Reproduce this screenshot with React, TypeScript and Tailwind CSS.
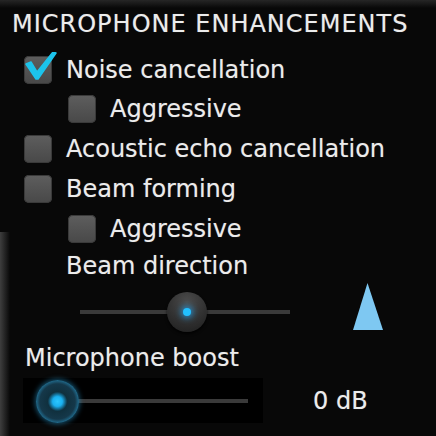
import React from "react";

function Box({ checked = false }: { checked?: boolean }) {
  return (
    <div className="relative w-[28px] h-[28px] shrink-0 rounded-[5px] bg-linear-to-b from-[#5e5e5e] to-[#484848] shadow-[inset_0_0_0_1px_#3a3a3a]">
      {checked && (
        <svg className="absolute left-0 top-[-4px]" width="34" height="34" viewBox="0 0 34 34">
          <path d="M2 12 L7 10 L13 20 L29 0 L32 1 L14 27 L12 27 Z" fill="#1cc4ec" stroke="#1cc4ec" strokeWidth="1.5" strokeLinejoin="round" />
        </svg>
      )}
    </div>
  );
}

function Row({ indent = false, checked = false, label, h = "h-[40px]" }: { indent?: boolean; checked?: boolean; label: string; h?: string }) {
  return (
    <div className={`flex items-center ${h} ${indent ? "pl-[68px]" : "pl-[24px]"}`}>
      <Box checked={checked} />
      <span className="ml-[14px] leading-none">{label}</span>
    </div>
  );
}

export default function App() {
  return (
    <div
      className="relative w-[436px] h-[436px] overflow-hidden bg-[#080808] text-[#ececec] text-[24px] [text-shadow:0_0_1px_rgba(255,255,255,0.35)]"
      style={{ fontFamily: '"DejaVu Sans", Verdana, sans-serif' }}
    >
      <div className="absolute left-0 top-0 w-full h-[8px] bg-linear-to-b from-[#262626] to-transparent" />
      <div className="absolute left-0 top-[232px] bottom-0 w-[10px] bg-linear-to-r from-[#3e3e3e] to-transparent" />

      <div className="flex flex-col pt-[4px]">
        <div className="h-[40px] flex items-center pl-[12px] leading-none tracking-[1px]">MICROPHONE ENHANCEMENTS</div>
        <div className="h-[7px]" />
        <Row checked label="Noise cancellation" h="h-[38px]" />
        <Row indent label="Aggressive" />
        <Row label="Acoustic echo cancellation" />
        <Row label="Beam forming" />
        <Row indent label="Aggressive" />
        <div className="h-[34px] flex items-center pl-[66px] leading-none">Beam direction</div>

        <div className="flex items-start">
          <div className="relative ml-[80px] mt-[8px] w-[210px] h-[42px] flex items-center">
            <div className="w-full h-[4px] bg-[#3a3a3a]" />
            <div className="absolute left-[87px] top-[1px] w-[40px] h-[40px] rounded-full bg-[radial-gradient(circle_at_50%_25%,#4c4c4c_0%,#353535_45%,#1c1c1c_100%)] shadow-[0_2px_3px_rgba(0,0,0,0.8)] flex items-center justify-center">
              <div className="w-[8px] h-[8px] rounded-full bg-[#22c0ff] shadow-[0_0_6px_2px_rgba(30,170,255,0.7)]" />
            </div>
          </div>
          <svg className="ml-[63px]" width="30" height="47" viewBox="0 0 30 47">
            <polygon points="14.5,0 30,47 0,47" fill="#7ec8f2" />
          </svg>
        </div>

        <div className="h-[40px] mt-[5px] flex items-center pl-[25px] leading-none">Microphone boost</div>

        <div className="flex items-center">
          <div className="relative ml-[23px] w-[240px] h-[45px] bg-black flex items-center">
            <div className="ml-[55px] w-[170px] h-[4px] bg-[#3a3a3a]" />
            <div className="absolute left-[13px] top-[2px] w-[43px] h-[43px] rounded-full bg-[radial-gradient(circle,#2cc8ff_0%,#1ab0f0_16%,#10303e_32%,#15384a_58%,#2a98c8_82%,#1b6a90_100%)] shadow-[0_0_5px_1px_rgba(40,160,220,0.5)]" />
          </div>
          <span className="ml-[50px] leading-none">0 dB</span>
        </div>
      </div>
    </div>
  );
}
